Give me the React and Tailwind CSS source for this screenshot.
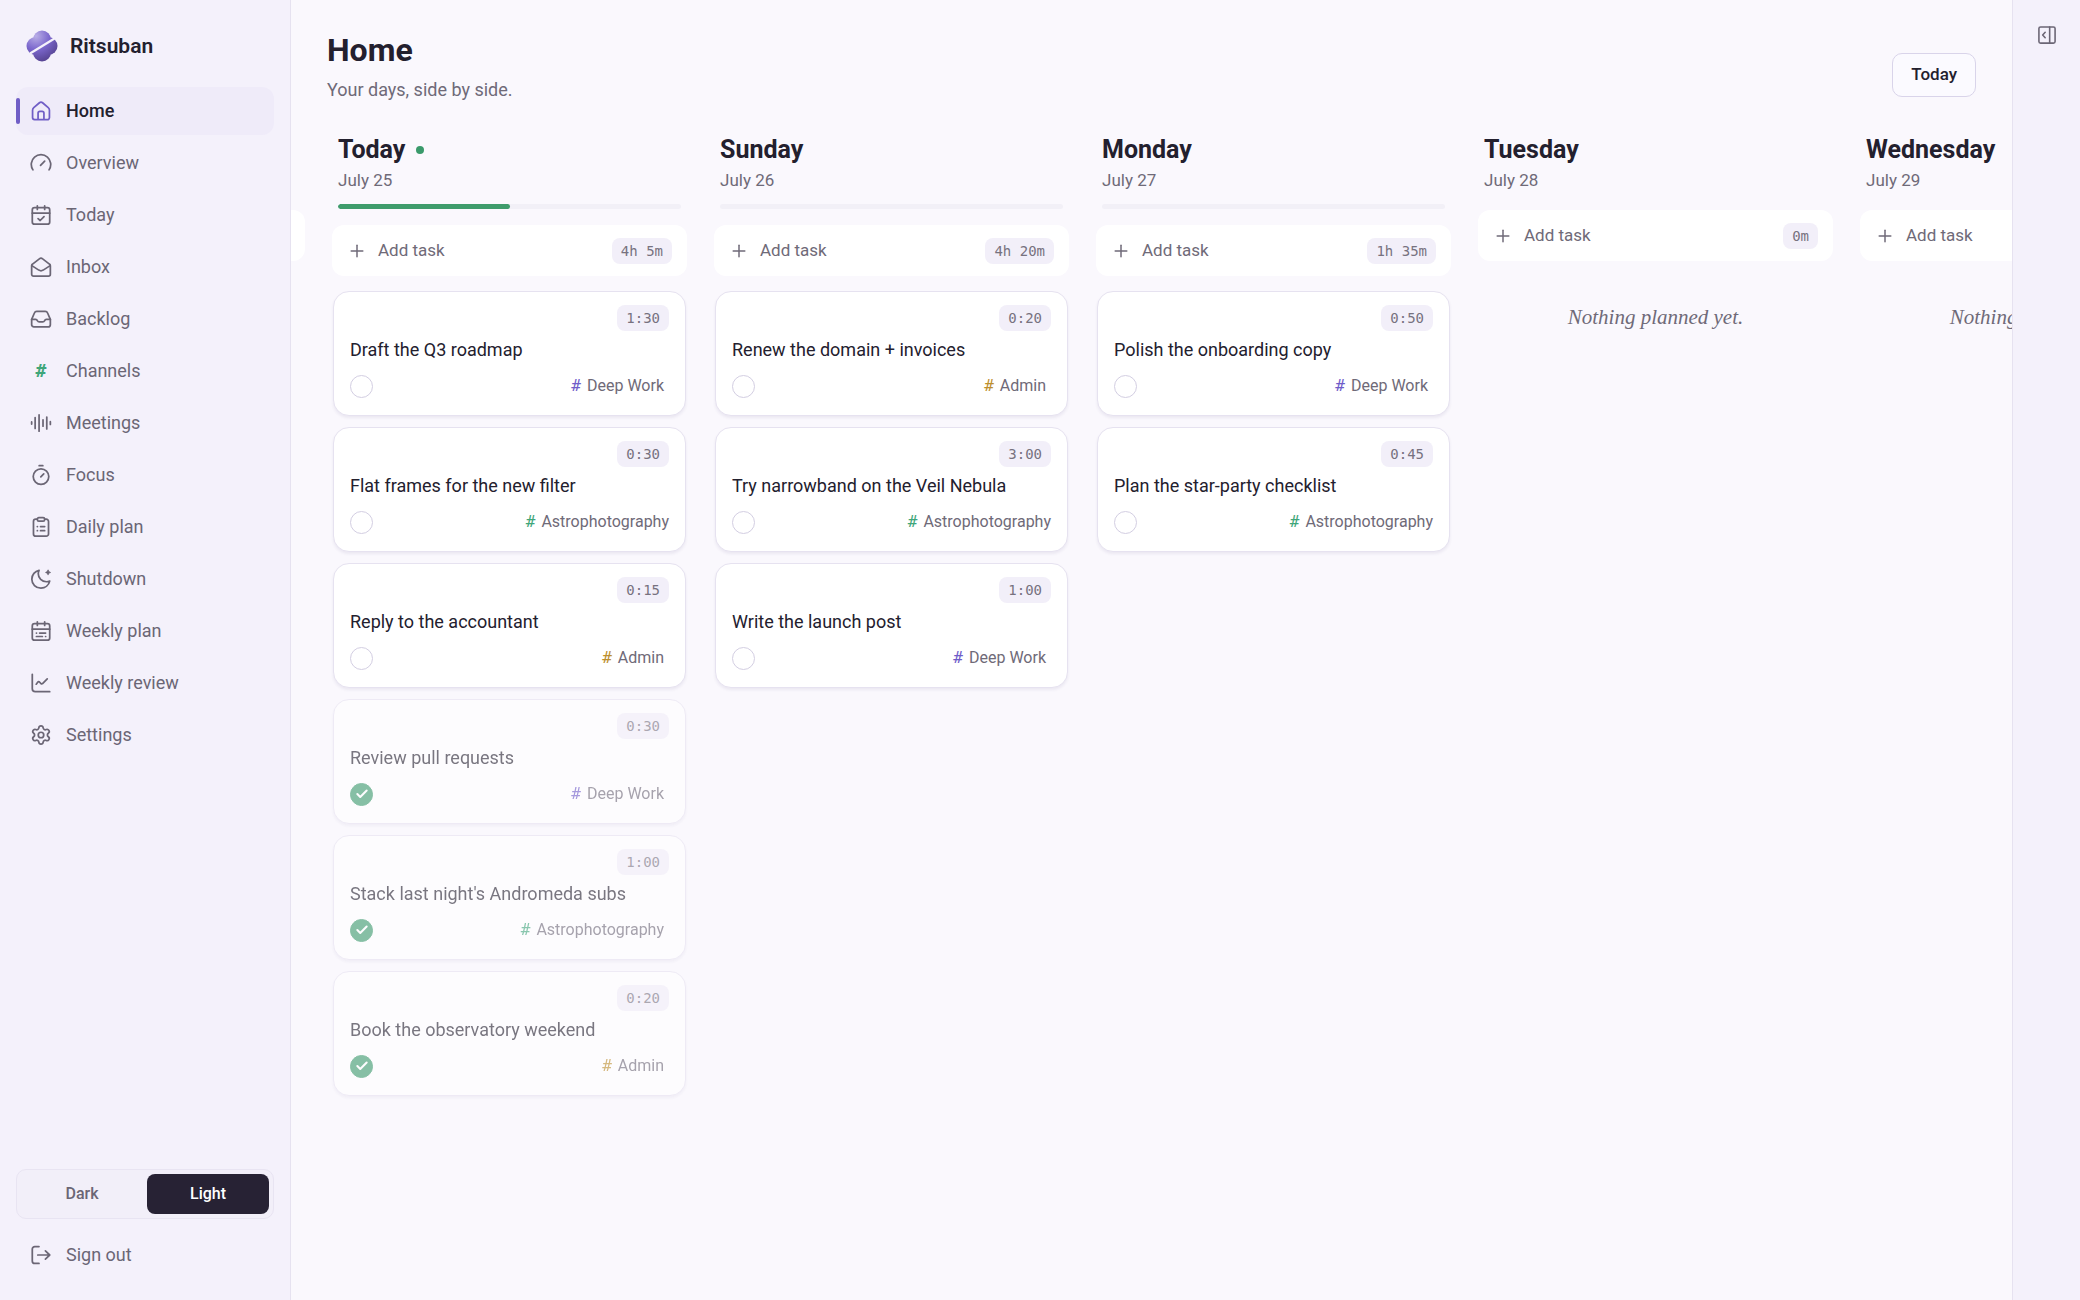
import React, { useState } from 'react';
import { Check, Plus, Settings } from 'lucide-react';

const Icon = ({ children, size = 22 }) => (
  <svg
    width={size}
    height={size}
    viewBox="0 0 24 24"
    fill="none"
    stroke="currentColor"
    strokeWidth="1.9"
    strokeLinecap="round"
    strokeLinejoin="round"
    aria-hidden="true"
  >
    {children}
  </svg>
);

const HomeIcon = () => (
  <Icon>
    <path d="M2.800 11.200c0-1.200.4-2 1.300-2.800l6.200-5.400c1.100-.9 2.300-.9 3.400 0l6.200 5.400c.9.8 1.300 1.600 1.300 2.800V19.200a2.200 2.200 0 0 1-2.200 2.200H5a2.200 2.200 0 0 1-2.200-2.200z" />
    <path d="M8.800 21v-6.500c0-1.200.8-2 2-2h2.400c1.200 0 2 .8 2 2V21" />
  </Icon>
);

const GaugeIcon = () => (
  <Icon>
    <path d="M3.200 19.500A10.600 10.600 0 1 1 20.800 19.500" />
    <path d="M11.500 14.500L16 10" />
  </Icon>
);

const CalendarFrame = () => (
  <>
    <rect x="2.500" y="4" width="19" height="18" rx="2.500" />
    <path d="M2.500 10h19M8 2v4M16 2v4" />
  </>
);

const CalendarCheckIcon = () => (
  <Icon>
    <CalendarFrame />
    <path d="M8.800 16l2.300 2 4.200-4.300" />
  </Icon>
);

const CalendarListIcon = () => (
  <Icon>
    <CalendarFrame />
    <path d="M7 14.300h.1M10.500 14.300H17M7 18h6.500M17 18h.1" />
  </Icon>
);

const MailOpenIcon = () => (
  <Icon>
    <path d="M1.800 10.600c0-.8.4-1.400 1-1.800l7.400-5.700c1.200-.9 2.400-.9 3.600 0l7.400 5.700c.6.4 1 1 1 1.800V20a2 2 0 0 1-2 2H3.800a2 2 0 0 1-2-2z" />
    <path d="M2 10.500l7.600 4.900c1.700 1 3.100 1 4.800 0l7.600-4.900" />
  </Icon>
);

const TrayIcon = () => (
  <Icon>
    <path d="M1.800 12.500l2.900-6.800C5.200 4.500 6 3.800 7.300 3.800h9.400c1.300 0 2.100.7 2.600 1.900l2.900 6.800v5.700a2.400 2.400 0 0 1-2.400 2.400H4.200a2.400 2.400 0 0 1-2.400-2.400z" />
    <path d="M1.800 12.500h4.400c1 0 1.500.6 1.900 1.400.4.9 1 1.300 2 1.300h3.800c1 0 1.600-.4 2-1.300.4-.8.900-1.400 1.900-1.400h4.400" />
  </Icon>
);

const WaveIcon = () => (
  <Icon>
    <path d="M1.800 10.800v2.400M5.600 6v12M9.900 3v18M14.200 8.500v7M18.300 5.500v13M22.200 10.500v3" />
  </Icon>
);

const StopwatchIcon = () => (
  <Icon>
    <circle cx="12" cy="13.700" r="8.500" />
    <path d="M10 1.900h4M11.800 14l3.200-3.200" />
  </Icon>
);

const ClipboardIcon = () => (
  <Icon>
    <path d="M8 3.500H6.300a2.500 2.500 0 0 0-2.500 2.500v13.500A2.500 2.500 0 0 0 6.300 22h11.400a2.500 2.500 0 0 0 2.500-2.500V6a2.500 2.500 0 0 0-2.500-2.500H16" />
    <rect x="8" y="1.800" width="8" height="3.900" rx="1.700" />
    <path d="M8 11.500h.1M11.500 11.500H16M8 16h.1M11.500 16H16" />
  </Icon>
);

const MoonIcon = () => (
  <Icon>
    <path d="M21.500 14.200c-1.100.6-2.300.8-3.600.8-4.900 0-8.900-3.800-8.900-8.600 0-1.400.3-2.700.9-3.900C5.400 3.400 2 7.400 2 12.200 2 17.600 6.400 22 11.900 22c4.700 0 8.600-3.300 9.600-7.800z" />
    <path d="M19.700 2.300c.3 1.700.8 2.200 2.500 2.500-1.700.3-2.200.8-2.500 2.500-.3-1.700-.8-2.200-2.500-2.500 1.700-.3 2.200-.8 2.500-2.500z" fill="currentColor" strokeWidth="1.100" />
  </Icon>
);

const TrendIcon = () => (
  <Icon>
    <path d="M2.500 2.500v15.800a3.200 3.200 0 0 0 3.200 3.200h15.800" />
    <path d="M6.800 13.300l1.800-2.300c.5-.6 1.100-.6 1.700-.1l1.700 1.700c.6.6 1.200.6 1.700 0l5.100-5" />
  </Icon>
);

const SignOutIcon = () => (
  <Icon>
    <path d="M9.800 2.800H5.200a2.700 2.700 0 0 0-2.700 2.700v13a2.700 2.700 0 0 0 2.700 2.700h4.600" />
    <path d="M8.500 12h13M16.800 7.500l4.700 4.500-4.700 4.500" />
  </Icon>
);

const PanelIcon = () => (
  <Icon size={20}>
    <rect x="2.300" y="2.300" width="19.400" height="19.400" rx="2" />
    <path d="M15.200 2.300v19.400M9.800 8.800L6.800 12l3 3.200" />
  </Icon>
);

const Logo = () => (
  <svg width="32" height="32" viewBox="0 0 32 32" aria-hidden="true">
    <defs>
      <radialGradient id="petals" gradientUnits="userSpaceOnUse" cx="10" cy="6" r="27">
        <stop offset="0" stopColor="#b9aee6" />
        <stop offset="0.5" stopColor="#7b67cd" />
        <stop offset="1" stopColor="#54428f" />
      </radialGradient>
    </defs>
    <g fill="url(#petals)">
      <circle cx="16" cy="9.500" r="9" />
      <circle cx="22.500" cy="16" r="9" />
      <circle cx="16" cy="22.500" r="9" />
      <circle cx="9.500" cy="16" r="9" />
    </g>
    <path d="M4 23.500L28.500 8.500" stroke="#f4f1fb" strokeWidth="2.200" />
  </svg>
);

const Hash = ({ className }) => (
  <span aria-hidden="true" className={`font-["DejaVu_Sans_Mono",monospace] ${className}`}>#</span>
);

const navItems = [
  { label: 'Home', icon: <HomeIcon />, active: true },
  { label: 'Overview', icon: <GaugeIcon /> },
  { label: 'Today', icon: <CalendarCheckIcon /> },
  { label: 'Inbox', icon: <MailOpenIcon /> },
  { label: 'Backlog', icon: <TrayIcon /> },
  { label: 'Channels', icon: <Hash className="w-[22px] text-center text-lg font-bold text-[#3fa67a]" /> },
  { label: 'Meetings', icon: <WaveIcon /> },
  { label: 'Focus', icon: <StopwatchIcon /> },
  { label: 'Daily plan', icon: <ClipboardIcon /> },
  { label: 'Shutdown', icon: <MoonIcon /> },
  { label: 'Weekly plan', icon: <CalendarListIcon /> },
  { label: 'Weekly review', icon: <TrendIcon /> },
  { label: 'Settings', icon: <Settings size={22} strokeWidth={1.9} /> },
];

const channels = {
  deep: { name: 'Deep Work', color: 'text-[#6f5cc9]' },
  astro: { name: 'Astrophotography', color: 'text-[#3fa67a]' },
  admin: { name: 'Admin', color: 'text-[#bd8f2e]' },
};

const days = [
  {
    name: 'Today',
    date: 'July 25',
    total: '4h 5m',
    progress: 50,
    today: true,
    tasks: [
      { title: 'Draft the Q3 roadmap', time: '1:30', channel: 'deep' },
      { title: 'Flat frames for the new filter', time: '0:30', channel: 'astro' },
      { title: 'Reply to the accountant', time: '0:15', channel: 'admin' },
      { title: 'Review pull requests', time: '0:30', channel: 'deep', done: true },
      { title: "Stack last night's Andromeda subs", time: '1:00', channel: 'astro', done: true },
      { title: 'Book the observatory weekend', time: '0:20', channel: 'admin', done: true },
    ],
  },
  {
    name: 'Sunday',
    date: 'July 26',
    total: '4h 20m',
    progress: 0,
    tasks: [
      { title: 'Renew the domain + invoices', time: '0:20', channel: 'admin' },
      { title: 'Try narrowband on the Veil Nebula', time: '3:00', channel: 'astro' },
      { title: 'Write the launch post', time: '1:00', channel: 'deep' },
    ],
  },
  {
    name: 'Monday',
    date: 'July 27',
    total: '1h 35m',
    progress: 0,
    tasks: [
      { title: 'Polish the onboarding copy', time: '0:50', channel: 'deep' },
      { title: 'Plan the star-party checklist', time: '0:45', channel: 'astro' },
    ],
  },
  { name: 'Tuesday', date: 'July 28', total: '0m', tasks: [] },
  { name: 'Wednesday', date: 'July 29', total: '0m', tasks: [] },
];

const TimeBadge = ({ children }) => (
  <span className="rounded-lg bg-[#f2eff9] px-[9px] font-['DejaVu_Sans_Mono',monospace] text-sm leading-[26px] text-[#77727f]">
    {children}
  </span>
);

const TaskCard = ({ task }) => {
  const [done, setDone] = useState(!!task.done);
  const channel = channels[task.channel];
  // the long channel name only keeps its inset once the task is done
  const inset = task.channel === 'astro' && !done ? '' : 'pr-[5px]';

  return (
    <li
      className={`mx-px flex flex-col rounded-2xl border border-[#e6e2f0] bg-white px-4 pt-[13px] pb-[17px] shadow-[0_2px_3px_rgba(60,45,110,0.08)] ${done ? 'opacity-60' : ''}`}
    >
      <div className="flex justify-end">
        <TimeBadge>{task.time}</TimeBadge>
      </div>
      <p className="mt-[7px] truncate text-lg leading-6 text-[#23202e]">{task.title}</p>
      <div className="mt-3 flex items-center justify-between">
        <label className="grid cursor-pointer place-items-center">
          <input
            type="checkbox"
            checked={done}
            onChange={() => setDone(!done)}
            aria-label={task.title}
            className="col-start-1 row-start-1 size-[23px] appearance-none rounded-full border border-[#d3cee2] checked:border-[#3a9a6b] checked:bg-[#3a9a6b]"
          />
          {done && <Check size={14} strokeWidth={3.5} className="pointer-events-none col-start-1 row-start-1 text-white" />}
        </label>
        <span className={`flex items-center gap-[6px] text-base leading-6 text-[#6f6a78] ${inset}`}>
          <Hash className={`text-base ${channel.color}`} />
          {channel.name}
        </span>
      </div>
    </li>
  );
};

const AddTask = ({ total }) => (
  <button type="button" className="flex h-[51px] w-full items-center rounded-xl bg-white px-[15px] text-[#6f6a78]">
    <Plus size={20} strokeWidth={1.8} />
    <span className="ml-[11px] flex-1 text-left text-[17px]">Add task</span>
    <TimeBadge>{total}</TimeBadge>
  </button>
);

const DayColumn = ({ day }) => (
  <section className="w-[355px] shrink-0">
    <header className="px-[6px]">
      <h2 className="flex items-center gap-[11px] text-[25px] leading-8 font-bold text-[#23202e]">
        {day.name}
        {day.today && <span className="size-2 rounded-full bg-[#3a9a6b]" />}
      </h2>
      <p className="text-[17px] leading-7 text-[#6f6a78]">{day.date}</p>
      {day.progress !== undefined && (
        <div className="mt-[10px] h-[5px] overflow-hidden rounded-full bg-[#f2f0f7]">
          <div className="h-full rounded-full bg-[#3f9c6c]" style={{ width: `${day.progress}%` }} />
        </div>
      )}
    </header>
    <div className="mt-4">
      <AddTask total={day.total} />
    </div>
    {day.tasks.length > 0 ? (
      <ul className="mt-[15px] flex flex-col gap-[11px]">
        {day.tasks.map((task) => (
          <TaskCard key={task.title} task={task} />
        ))}
      </ul>
    ) : (
      <p className="mt-[42px] text-center font-['Liberation_Serif',serif] text-[21px] leading-7 text-[#6f6a78] italic">
        Nothing planned yet.
      </p>
    )}
  </section>
);

const Sidebar = () => {
  const [theme, setTheme] = useState('Light');

  return (
    <aside className="flex w-[291px] shrink-0 flex-col border-r border-[#e6e2f0] bg-[#f4f1fb] px-4 pt-[30px] pb-[21px]">
      <div className="flex items-center gap-3 pl-[10px]">
        <Logo />
        <span className="text-[21px] leading-8 font-semibold text-[#23202e]">Ritsuban</span>
      </div>

      <nav className="mt-[25px] flex flex-col gap-1">
        {navItems.map((item) => (
          <a
            key={item.label}
            href="#"
            aria-current={item.active ? 'page' : undefined}
            className={`relative flex h-12 items-center gap-[14px] rounded-xl px-[14px] text-lg ${
              item.active ? 'bg-[#efebf9] font-medium text-[#23202e]' : 'font-[450] text-[#6b6675]'
            }`}
          >
            {item.active && <span className="absolute top-[11px] left-0 h-[26px] w-1 rounded-xs bg-[#705ec6]" />}
            <span className={`flex ${item.active ? 'text-[#705ec6]' : ''}`}>{item.icon}</span>
            {item.label}
          </a>
        ))}
      </nav>

      <div className="mt-auto flex gap-1 rounded-[10px] border border-[#e8e4f2] bg-[#f2eff9] p-1">
        {['Dark', 'Light'].map((name) => (
          <button
            key={name}
            type="button"
            aria-pressed={theme === name}
            onClick={() => setTheme(name)}
            className={`h-10 flex-1 rounded-lg text-base font-medium ${
              theme === name ? 'bg-[#272234] text-white' : 'text-[#6b6675]'
            }`}
          >
            {name}
          </button>
        ))}
      </div>
      <button type="button" className="mt-3 flex h-12 items-center gap-[14px] px-[14px] text-lg font-[450] text-[#6b6675]">
        <SignOutIcon />
        Sign out
      </button>
    </aside>
  );
};

export default function App() {
  return (
    <div className="flex h-screen bg-[#faf8fd] font-[Roboto,sans-serif]">
      <Sidebar />

      <main className="flex min-w-0 flex-1 flex-col overflow-hidden">
        <div className="flex items-end justify-between px-9 pt-7">
          <div>
            <h1 className="text-[32px] leading-[44px] font-bold text-[#23202e]">Home</h1>
            <p className="mt-1 text-lg leading-7 text-[#6f6a78]">Your days, side by side.</p>
          </div>
          <button
            type="button"
            className="mb-[7px] h-11 rounded-[10px] border border-[#d9d4ea] bg-[#fbfaff] px-[18px] text-[17px] font-medium text-[#23202e]"
          >
            Today
          </button>
        </div>

        <div className="mt-[30px] flex flex-1 gap-[27px] overflow-hidden">
          {/* tail of the previous day, scrolled out on the left */}
          <div className="mt-[76px] h-[51px] w-[14px] shrink-0 rounded-r-xl bg-white" />
          {days.map((day) => (
            <DayColumn key={day.name} day={day} />
          ))}
        </div>
      </main>

      <aside className="flex w-[68px] shrink-0 flex-col items-center border-l border-[#e6e2f0] bg-[#f4f1fb] pt-[25px]">
        <button type="button" aria-label="Expand panel" className="text-[#6b6675]">
          <PanelIcon />
        </button>
      </aside>
    </div>
  );
}
